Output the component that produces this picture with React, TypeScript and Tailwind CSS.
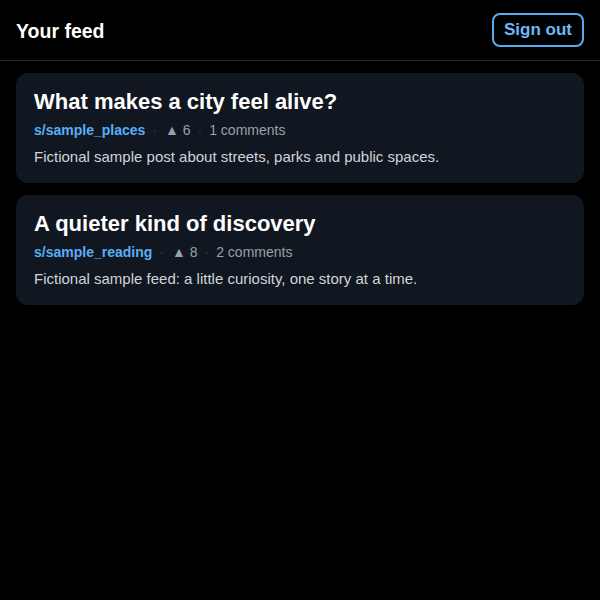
import React from "react";

const posts = [
  {
    title: "What makes a city feel alive?",
    sub: "s/sample_places",
    votes: 6,
    comments: 1,
    body: "Fictional sample post about streets, parks and public spaces.",
  },
  {
    title: "A quieter kind of discovery",
    sub: "s/sample_reading",
    votes: 8,
    comments: 2,
    body: "Fictional sample feed: a little curiosity, one story at a time.",
  },
];

export default function App() {
  return (
    <div
      className="min-h-screen bg-black text-white"
      style={{ fontFamily: '"Liberation Sans", Arial, sans-serif' }}
    >
      <header className="h-[61px] flex items-center justify-between px-4 border-b border-[#262a36]">
        <h1 className="text-[19.5px] font-bold mt-[3px]">Your feed</h1>
        <button className="h-[34px] w-[92px] rounded-[8px] border-2 border-[#5aaaf0] text-[#6cb8f8] text-[17px] font-bold">
          Sign out
        </button>
      </header>
      <main className="flex flex-col gap-3 px-4 pt-3">
        {posts.map((p) => (
          <article key={p.title} className="bg-[#111720] rounded-[12px] px-[18px] pt-[16px] h-[110px]">
            <h2 className="text-[22px] font-bold leading-[26px]">{p.title}</h2>
            <div className="mt-[6px] flex items-center text-[14px] leading-[18px] text-[#9aa0a8]">
              <span className="font-bold text-[#5aaef5]">{p.sub}</span>
              <span className="ml-[7px] mr-[8px] text-[#33383f]">·</span>
              <span>▲ {p.votes}</span>
              <span className="ml-[7px] mr-[7px] text-[#33383f]">·</span>
              <span>{p.comments} comments</span>
            </div>
            <p className="mt-[8px] text-[15px] leading-[20px] text-[#d0d4da]">{p.body}</p>
          </article>
        ))}
      </main>
    </div>
  );
}
